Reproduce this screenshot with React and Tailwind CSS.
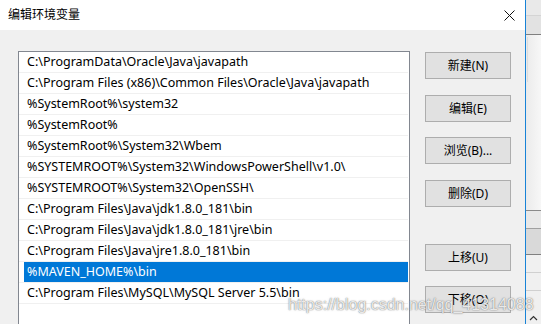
import React from 'react';

const paths = [
  'C:\\ProgramData\\Oracle\\Java\\javapath',
  'C:\\Program Files (x86)\\Common Files\\Oracle\\Java\\javapath',
  '%SystemRoot%\\system32',
  '%SystemRoot%',
  '%SystemRoot%\\System32\\Wbem',
  '%SYSTEMROOT%\\System32\\WindowsPowerShell\\v1.0\\',
  '%SYSTEMROOT%\\System32\\OpenSSH\\',
  'C:\\Program Files\\Java\\jdk1.8.0_181\\bin',
  'C:\\Program Files\\Java\\jdk1.8.0_181\\jre\\bin',
  'C:\\Program Files\\Java\\jre1.8.0_181\\bin',
  '%MAVEN_HOME%\\bin',
  'C:\\Program Files\\MySQL\\MySQL Server 5.5\\bin',
];

const selected = 10;

const WinButton = ({ label, className = '' }) => (
  <button
    className={`w-[86px] h-[27px] border border-[#adadad] bg-[#e1e1e1] text-[12px] text-black flex items-center justify-center ${className}`}
  >
    {label}
  </button>
);

const App = () => {
  return (
    <div
      className="relative w-[541px] h-[324px] overflow-hidden flex bg-[#f0f0f0]"
      style={{ fontFamily: '"Noto Sans", "Noto Sans CJK SC", sans-serif' }}
    >
      {/* dialog */}
      <div className="w-[526px] h-full flex flex-col border-r border-[#1883d7] bg-[#f0f0f0]">
        <div className="h-[30px] bg-white flex items-center justify-between pl-[8px] pr-[10px] shrink-0">
          <span className="text-[12px] text-black leading-none">编辑环境变量</span>
          <svg width="11" height="11" viewBox="0 0 11 11">
            <path d="M0.5 0.5 L10.5 10.5 M10.5 0.5 L0.5 10.5" stroke="#111" strokeWidth="1" />
          </svg>
        </div>

        <div className="flex flex-1 pt-[21px] pl-[18px]">
          <div className="w-[392px] h-[300px] border border-[#828790] bg-white pr-[1px]">
            {paths.map((p, i) => (
              <div key={i} className="h-[21px] border-b border-[#f0f0f0] flex">
                {i === selected ? (
                  <div className="ml-[5px] flex-1 bg-[#0078d7] text-white text-[12.5px] pl-[3px] flex items-center">
                    {p}
                  </div>
                ) : (
                  <div className="pl-[8px] text-[12.5px] text-black flex items-center whitespace-nowrap">
                    {p}
                  </div>
                )}
              </div>
            ))}
          </div>

          <div className="ml-[15px] mt-[1px] flex flex-col">
            <WinButton label="新建(N)" />
            <WinButton label="编辑(E)" className="mt-[16px]" />
            <WinButton label="浏览(B)..." className="mt-[15px]" />
            <WinButton label="删除(D)" className="mt-[16px]" />
            <WinButton label="上移(U)" className="mt-[37px]" />
            <WinButton label="下移(O)" className="mt-[15px]" />
          </div>
        </div>
      </div>

      {/* window behind */}
      <div className="flex-1 h-full flex flex-col">
        <div className="h-[16px] bg-[#e9e9e9] border-b border-[#d4d4d4]" />
        <div className="h-[19px] bg-[#e2e2e2] border-b border-[#7f7f7f]" />
        <div className="h-[175px] bg-gradient-to-r from-[#ebebeb] to-[#f7f7f7] flex">
          <div className="ml-[1px] mt-[2px] w-[1px] h-[45px] bg-[#dcdcdc]" />
        </div>
        <div className="h-[18px] bg-[#e8e8e8] border-t border-[#8a8a8a]" />
        <div className="h-[26px] bg-[#d9d9d9] border-t border-[#a0a0a0]" />
        <div className="h-[18px] bg-[#f0f0f0] border-t border-[#808080]" />
        <div className="h-[18px] bg-[#f0f0f0] border-t border-[#d0d0d0]" />
        <div className="h-[20px] bg-[#f0f0f0] border-t border-[#d0d0d0]" />
        <div className="flex-1 bg-[#f0f0f0] flex items-end justify-center">
          <svg width="9" height="6" viewBox="0 0 9 6" className="mb-[3px]">
            <path d="M1 5 L4.5 1.5 L8 5" stroke="#333" strokeWidth="1.2" fill="none" />
          </svg>
        </div>
      </div>

      {/* watermark */}
      <div
        className="absolute left-[288px] top-[297px] text-[16px] leading-none text-[rgba(255,255,255,0.85)] [text-shadow:0_0_1px_rgba(90,90,90,0.9),0_0_2px_rgba(140,140,140,0.5)]"
        style={{ fontFamily: '"Liberation Sans", Arial, sans-serif' }}
      >
        https://blog.csdn.net/qq_41314088
      </div>
    </div>
  );
};

export default App;
